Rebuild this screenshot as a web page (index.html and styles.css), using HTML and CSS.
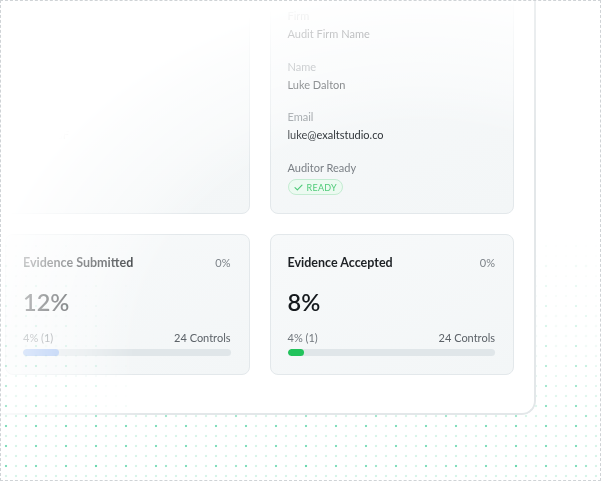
FILE: index.html
```html
<!DOCTYPE html>
<html>
<head>
<meta charset="utf-8">
<link rel="stylesheet" href="styles.css">
</head>
<body>
<div class="frame">
  <div class="panel">
    <div class="grid">
      <div class="card info">
        <div class="field"><div class="label">Audit Type</div><div class="value">ISO/IEC 27005</div></div>
        <div class="field"><div class="label">Start Date</div><div class="value">Framework</div></div>
        <div class="field"><div class="label">End Date</div><div class="value">NIST CSF</div></div>
      </div>
      <div class="card info">
        <div class="field"><div class="label">Firm</div><div class="value">Audit Firm Name</div></div>
        <div class="field"><div class="label">Name</div><div class="value">Luke Dalton</div></div>
        <div class="field"><div class="label">Email</div><div class="value">luke@exaltstudio.co</div></div>
        <div class="field">
          <div class="label label-strong">Auditor Ready</div>
          <div class="badge">
            <svg class="check" viewBox="0 0 10 8" width="9" height="7"><path d="M1 4.2 L3.7 6.8 L9 1.2" fill="none" stroke="#4cc978" stroke-width="1.3" stroke-linecap="round" stroke-linejoin="round"/></svg>
            <span>READY</span>
          </div>
        </div>
      </div>
      <div class="card stat">
        <div class="stat-head"><span class="stat-title">Evidence Submitted</span><span class="stat-delta">0%</span></div>
        <div class="stat-big">12%</div>
        <div class="stat-meta"><span>4% (1)</span><span class="controls">24 Controls</span></div>
        <div class="bar"><div class="fill fill-blue" style="width:36px"></div></div>
      </div>
      <div class="card stat">
        <div class="stat-head"><span class="stat-title">Evidence Accepted</span><span class="stat-delta">0%</span></div>
        <div class="stat-big">8%</div>
        <div class="stat-meta"><span>4% (1)</span><span class="controls">24 Controls</span></div>
        <div class="bar"><div class="fill fill-green" style="width:16px"></div></div>
      </div>
    </div>
  </div>
</div>
</body>
</html>
```
FILE: styles.css
```css
html, body {
  margin: 0;
  padding: 0;
  background: #ffffff;
}
body {
  font-family: "Lato", "Open Sans", sans-serif;
}
.frame {
  position: relative;
  box-sizing: border-box;
  width: 601px;
  height: 481px;
  border: 1px dashed #cfd3d6;
  overflow: hidden;
  background: #ffffff;
}
.frame::before {
  content: "";
  position: absolute;
  inset: 0;
  background-image:
    radial-gradient(circle at 5px 5px, rgba(60, 205, 150, 0.55) 1px, transparent 1.6px),
    radial-gradient(circle at 5px 5px, rgba(60, 205, 150, 0.35) 1px, transparent 1.6px),
    radial-gradient(circle at 5px 5px, rgba(60, 205, 150, 0.2) 1px, transparent 1.6px);
  background-size: 30px 20px, 70px 50px, 10px 10px;
  background-position: 0 0, 20px 10px, 0 0;
  -webkit-mask-image: linear-gradient(to top, #000 0, #000 60px, rgba(0,0,0,0.35) 140px, transparent 250px);
  mask-image: linear-gradient(to top, #000 0, #000 60px, rgba(0,0,0,0.35) 140px, transparent 250px);
}
.panel {
  position: relative;
  z-index: 1;
  box-sizing: border-box;
  width: 553px;
  height: 446px;
  margin-left: -18px;
  margin-top: -32px;
  padding: 22px 20px 38px 22px;
  background: #ffffff;
  border-right: 2px solid #e3e7e9;
  border-bottom: 2px solid #e3e7e9;
  border-radius: 0 0 14px 0;
  -webkit-mask-image:
    radial-gradient(420px 349px at 437px 392px, #000 0%, #000 68%, rgba(0,0,0,0.6) 80%, rgba(0,0,0,0.42) 90%, rgba(0,0,0,0.25) 98%, transparent 107%),
    linear-gradient(to left, rgba(0,0,0,0.65) 0, rgba(0,0,0,0.65) 4px, transparent 6px);
  mask-image:
    radial-gradient(420px 349px at 437px 392px, #000 0%, #000 68%, rgba(0,0,0,0.6) 80%, rgba(0,0,0,0.42) 90%, rgba(0,0,0,0.25) 98%, transparent 107%),
    linear-gradient(to left, rgba(0,0,0,0.65) 0, rgba(0,0,0,0.65) 4px, transparent 6px);
}
.grid {
  display: grid;
  grid-template-columns: 1fr 1fr;
  grid-template-rows: 223px 141px;
  column-gap: 20px;
  row-gap: 20px;
}
.card {
  box-sizing: border-box;
  border: 1px solid #e3e8eb;
  border-radius: 8px;
  background: linear-gradient(160deg, #f7f9fa 0%, #f3f6f7 100%);
}
.info {
  padding: 17px 18px 0 17px;
  display: flex;
  flex-direction: column;
  gap: 18.5px;
}
.field {
  display: flex;
  flex-direction: column;
  gap: 4px;
}
.label {
  font-size: 11px;
  line-height: 14px;
  color: #8d9398;
}
.label-strong {
  color: #7b8086;
}
.value {
  font-size: 11px;
  line-height: 14px;
  color: #30353a;
}
.badge {
  display: inline-flex;
  align-self: flex-start;
  align-items: center;
  gap: 4px;
  box-sizing: border-box;
  height: 16px;
  margin-top: 0.5px;
  padding: 0 5px 0 5px;
  border: 1px solid #c4ecd2;
  border-radius: 8px;
  background: #ecfaf1;
  color: #4fcb78;
  font-size: 9px;
  letter-spacing: 0.3px;
}
.check {
  display: block;
}
.stat {
  padding: 19px 18px 0 17px;
  display: flex;
  flex-direction: column;
}
.stat-head {
  display: flex;
  justify-content: space-between;
  align-items: center;
  height: 16px;
}
.stat-title {
  font-size: 12.5px;
  font-weight: 700;
  color: #1d2125;
}
.stat-delta {
  font-size: 11px;
  color: #7d8389;
}
.stat-big {
  margin-top: 19px;
  height: 26px;
  line-height: 26px;
  font-size: 23.5px;
  font-weight: 600;
  color: #15191d;
}
.stat-meta {
  margin-top: 16px;
  display: flex;
  justify-content: space-between;
  height: 14px;
  line-height: 14px;
  font-size: 11px;
  color: #72787e;
}
.controls {
  color: #5c6268;
}
.bar {
  margin-top: 4px;
  height: 7px;
  border-radius: 4px;
  background: #e0e6e9;
  overflow: hidden;
}
.fill {
  height: 100%;
  border-radius: 4px;
}
.fill-blue {
  background: #94b6f1;
}
.fill-green {
  background: #22c35c;
}
```
